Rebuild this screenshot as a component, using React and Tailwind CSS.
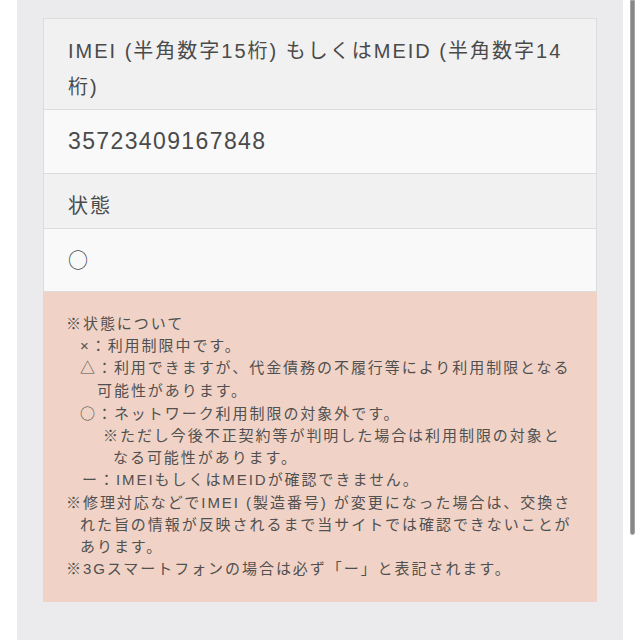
import React from "react";

const cjk = { fontFamily: '"Noto Sans CJK JP", sans-serif' };

const noteLines = [
  { text: "※状態について", indent: "ml-0" },
  { text: "×：利用制限中です。", indent: "ml-[14px]" },
  { text: "△：利用できますが、代金債務の不履行等により利用制限となる", indent: "ml-[14px]" },
  { text: "可能性があります。", indent: "ml-[31px]" },
  { text: "○：ネットワーク利用制限の対象外です。", indent: "ml-[14px]" },
  { text: "※ただし今後不正契約等が判明した場合は利用制限の対象と", indent: "ml-[37px]" },
  { text: "なる可能性があります。", indent: "ml-[47px]" },
  { text: "ー：IMEIもしくはMEIDが確認できません。", indent: "ml-[16px]" },
  { text: "※修理対応などでIMEI (製造番号) が変更になった場合は、交換さ", indent: "ml-0" },
  { text: "れた旨の情報が反映されるまで当サイトでは確認できないことが", indent: "ml-[14px]" },
  { text: "あります。", indent: "ml-[14px]" },
  { text: "※3Gスマートフォンの場合は必ず「ー」と表記されます。", indent: "ml-0" },
];

// ○ は欧文フォントだと小さいので和文フォントで描く
const withCircle = (text) =>
  text.split("○").map((part, i) => (
    <React.Fragment key={i}>
      {i > 0 && <span style={cjk}>○</span>}
      {part}
    </React.Fragment>
  ));

export default function App() {
  return (
    <div
      className="flex h-[640px] w-[640px] overflow-hidden bg-white text-[#4a4a4a]"
      style={{ fontFamily: '"Liberation Sans", "Noto Sans CJK JP", sans-serif' }}
    >
      <div className="w-[17px] shrink-0" />
      <div className="flex w-[606px] shrink-0 flex-col bg-[#ebebed] px-[26px] pt-[18px]">
        <div className="border border-[#dcdcdc]">
          {/* 見出し */}
          <div className="border-b border-[#dcdcdc] bg-[#f1f1f1] pl-[24px] pt-[14px] pb-[4px] text-[20px] leading-[36px] tracking-[0.1em] whitespace-nowrap">
            IMEI (半角数字15桁) もしくはMEID (半角数字14
            <br />
            桁)
          </div>
          <div className="flex h-[64px] items-center border-b border-[#dcdcdc] bg-[#f9f9f9] pl-[24px] text-[23px] tracking-[0.06em]">
            35723409167848
          </div>
          <div className="border-b border-[#dcdcdc] bg-[#f1f1f1] pl-[24px] pt-[14px] pb-[4px] text-[20px] leading-[36px] tracking-[0.1em]">
            状態
          </div>
          <div className="flex h-[62px] items-center bg-[#f9f9f9] pl-[24px] text-[20px]" style={cjk}>
            ○
          </div>
        </div>

        {/* 注意書き */}
        <div className="bg-[#f0d3c6] pl-[23px] pt-[21px] pb-[22px] text-[15px] leading-[22.2px] tracking-[0.13em] text-[#505050]">
          {noteLines.map((line, i) => (
            <div key={i} className={`whitespace-nowrap ${line.indent}`}>
              {withCircle(line.text)}
            </div>
          ))}
        </div>
      </div>
      <div className="w-[7px] shrink-0" />
      <div className="h-[535px] w-[5px] shrink-0 rounded-b-full border border-[#a5a5a5] bg-[#878787]" />
    </div>
  );
}
